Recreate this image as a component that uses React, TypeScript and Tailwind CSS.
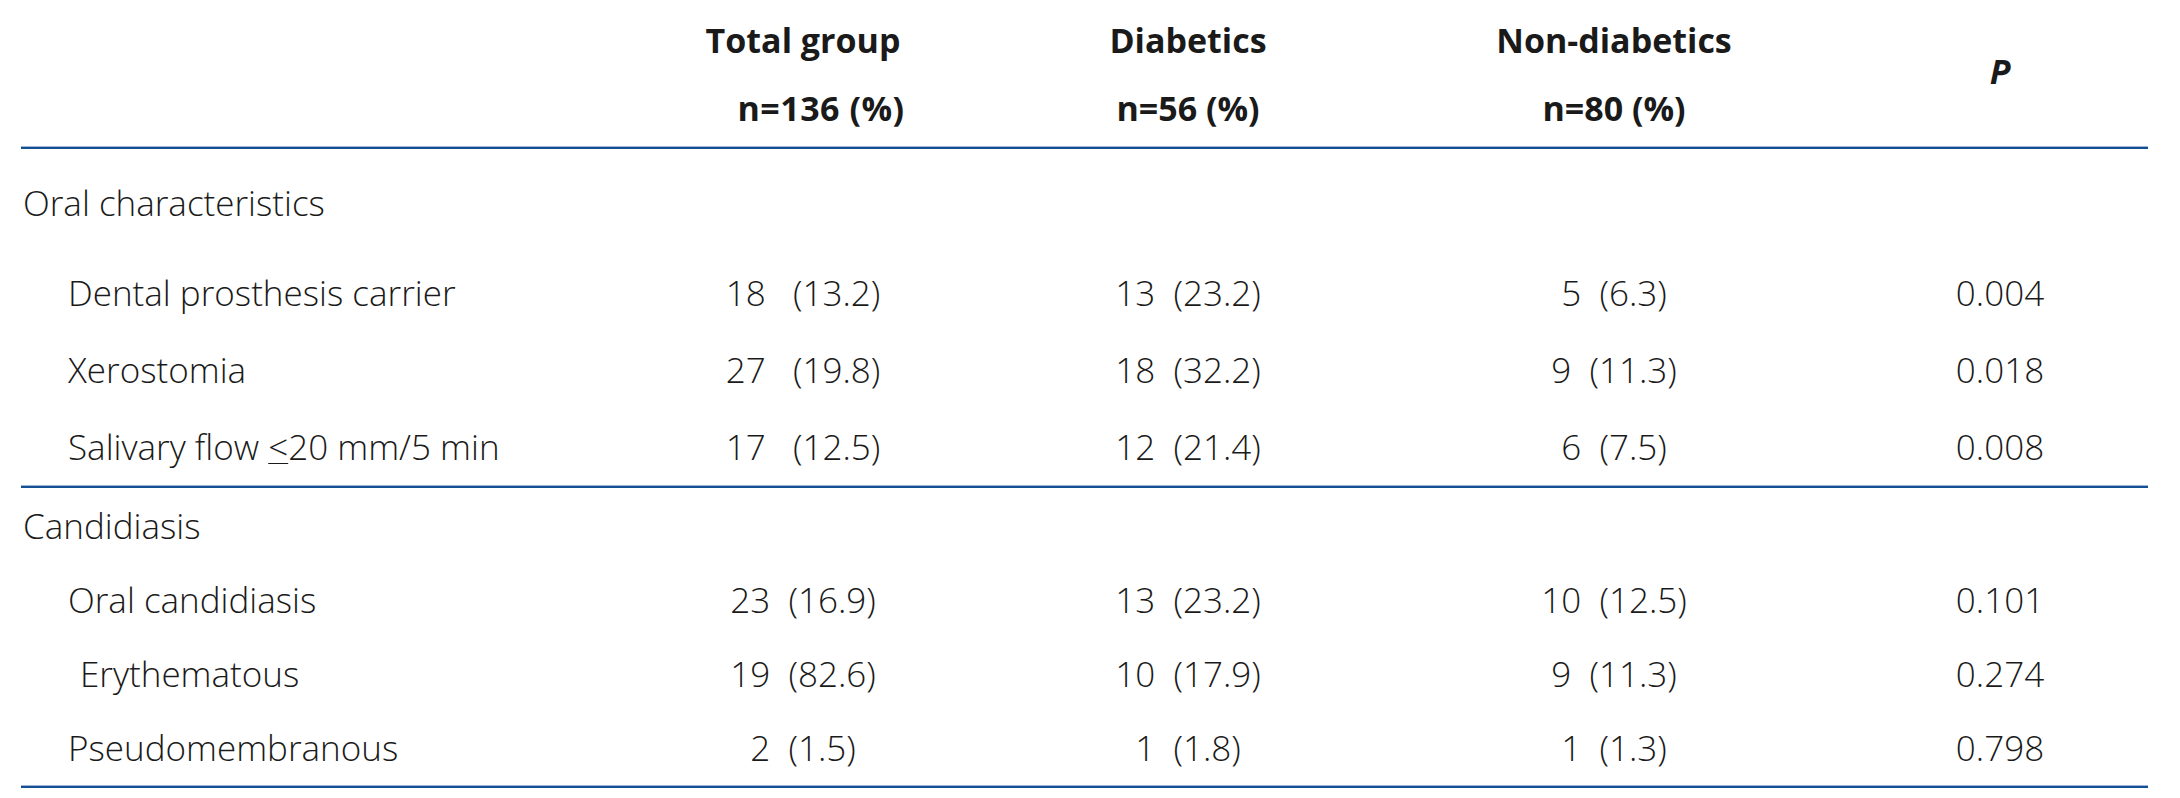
import React from 'react';

type Row = { label: string; indent?: string; total: string; diab: string; non: string; p: string };

const oral: Row[] = [
  { label: 'Dental prosthesis carrier', total: '18\u00a0\u00a0\u00a0(13.2)', diab: '13\u00a0\u00a0(23.2)', non: '5\u00a0\u00a0(6.3)', p: '0.004' },
  { label: 'Xerostomia', total: '27\u00a0\u00a0\u00a0(19.8)', diab: '18\u00a0\u00a0(32.2)', non: '9\u00a0\u00a0(11.3)', p: '0.018' },
  { label: 'Salivary flow ≤20 mm/5 min', total: '17\u00a0\u00a0\u00a0(12.5)', diab: '12\u00a0\u00a0(21.4)', non: '6\u00a0\u00a0(7.5)', p: '0.008' },
];

const candida: Row[] = [
  { label: 'Oral candidiasis', total: '23\u00a0\u00a0(16.9)', diab: '13\u00a0\u00a0(23.2)', non: '10\u00a0\u00a0(12.5)', p: '0.101' },
  { label: 'Erythematous', indent: 'pl-[59px]', total: '19\u00a0\u00a0(82.6)', diab: '10\u00a0\u00a0(17.9)', non: '9\u00a0\u00a0(11.3)', p: '0.274' },
  { label: 'Pseudomembranous', total: '2\u00a0\u00a0(1.5)', diab: '1\u00a0\u00a0(1.8)', non: '1\u00a0\u00a0(1.3)', p: '0.798' },
];

const cols = 'grid grid-cols-[585px_394px_376px_476px_296px]';

const DataRow: React.FC<{ row: Row; h: string }> = ({ row, h }) => (
  <div className={`${cols} ${h} items-center`}>
    <div className={row.indent ?? 'pl-[47px]'}>
      {row.label === 'Salivary flow ≤20 mm/5 min' ? (
        <span>
          Salivary flow <span className="underline underline-offset-[3px] decoration-1">&lt;</span>20 mm/5 min
        </span>
      ) : (
        row.label
      )}
    </div>
    <div className="text-center">{row.total}</div>
    <div className="text-center">{row.diab}</div>
    <div className="text-center">{row.non}</div>
    <div className="text-center">{row.p}</div>
  </div>
);

const Rule = () => <div className="h-[3px] border-t border-[#9db6d6] bg-[#134f92]" />;

export default function App() {
  return (
    <div className="w-[2180px] h-[798px] bg-white text-[#1a1a1a] font-['Open_Sans',sans-serif]">
      <div className="ml-[21px] w-[2127px] text-[35px] font-light leading-[40px]">
        {/* Header */}
        <div className={`${cols} h-[146px] text-[34px] font-bold leading-[68px] pt-[6px]`}>
          <div />
          <div className="text-center">
            <div>Total group</div>
            <div className="pl-[36px] tracking-[0.5px]">n=136 (%)</div>
          </div>
          <div className="text-center">
            <div>Diabetics</div>
            <div>n=56 (%)</div>
          </div>
          <div className="text-center">
            <div>Non-diabetics</div>
            <div>n=80 (%)</div>
          </div>
          <div className="flex items-center justify-center pb-[10px] italic">P</div>
        </div>
        <Rule />

        {/* Oral characteristics */}
        <div className="h-[105px] pt-[34px] pl-[2px]">Oral characteristics</div>
        {oral.map((r) => (
          <DataRow key={r.label} row={r} h="h-[77px]" />
        ))}
        <Rule />

        {/* Candidiasis */}
        <div className="h-[75px] flex items-center pl-[2px]">Candidiasis</div>
        {candida.map((r) => (
          <DataRow key={r.label} row={r} h="h-[74px]" />
        ))}
        <Rule />
      </div>
    </div>
  );
}
